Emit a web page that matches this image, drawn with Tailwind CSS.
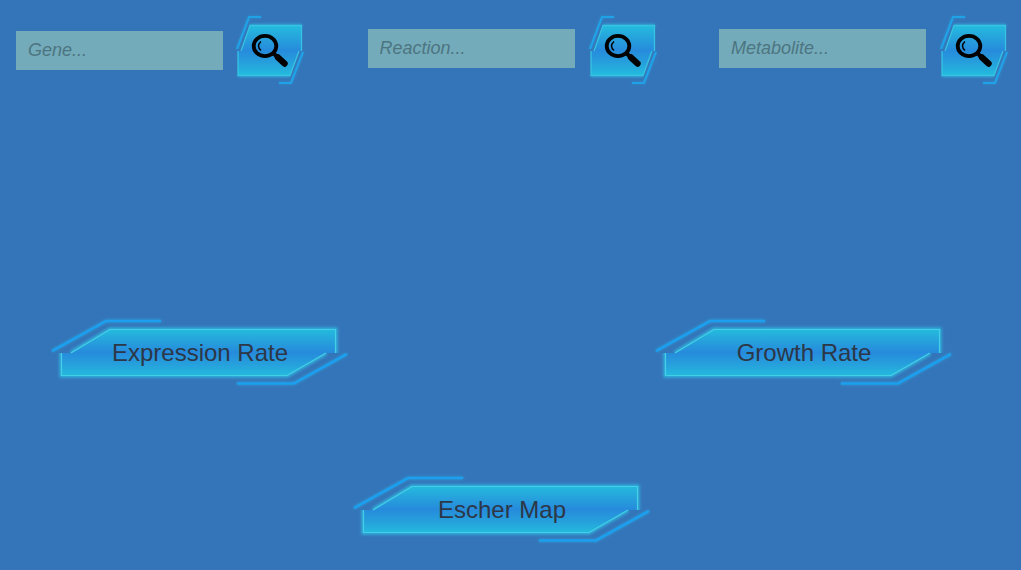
<!DOCTYPE html>
<html lang="en">
<head>
<meta charset="utf-8">
<meta name="viewport" content="width=device-width, initial-scale=1">
<title>Metabolic search</title>
<script src="https://cdn.jsdelivr.net/npm/@tailwindcss/browser@4"></script>
</head>
<body class="min-h-screen bg-[#3475b9] font-['Liberation_Sans',Arial,sans-serif]">
<svg class="absolute size-0" aria-hidden="true">
  <defs>
    <linearGradient id="fill" x1="0" y1="0" x2="0" y2="1">
      <stop offset="0" stop-color="#24bbde"/>
      <stop offset=".25" stop-color="#26a2dc"/>
      <stop offset=".5" stop-color="#268bdc"/>
      <stop offset=".75" stop-color="#26a0dc"/>
      <stop offset="1" stop-color="#24bbde"/>
    </linearGradient>
    <filter id="glow" x="-20%" y="-40%" width="140%" height="180%"><feGaussianBlur stdDeviation="1.6"/></filter>
    <clipPath id="wideTop"><rect width="310" height="41"/></clipPath>
    <clipPath id="wideBottom"><rect y="41" width="310" height="39"/></clipPath>
    <symbol id="wide" viewBox="0 0 310 80">
      <path d="M8 38.500 61 9H115M193 71.500H249L301 42.500" fill="none" stroke="#2fb9e6" stroke-width="3" stroke-linecap="round" opacity=".5" filter="url(#glow)"/>
      <path d="M8 38.500 61 9H115M193 71.500H249L301 42.500" fill="none" stroke="#1b9fee" stroke-width="2.6" stroke-linecap="round"/>
      <g clip-path="url(#wideTop)"><path d="M26 41 65 17.500H290.500V44" fill="none" stroke="#2fc6ea" stroke-width="4" opacity=".8" filter="url(#glow)"/></g>
      <g clip-path="url(#wideBottom)"><path d="M16.500 38V63.500H242L281 41" fill="none" stroke="#2fc6ea" stroke-width="4" opacity=".8" filter="url(#glow)"/></g>
      <path d="M16 41H26L65 17H291V41H281L242 64H16Z" fill="url(#fill)"/>
      <path d="M26 41 65 17.500H290.500V41M16.500 41V63.500H242L281 41" fill="none" stroke="#43d0e6" stroke-width="1.200"/>
    </symbol>
    <symbol id="small" viewBox="0 0 76 76">
      <path d="M5 37 17 5H29M47 71H59L71 40" fill="none" stroke="#2fb9e6" stroke-width="2" opacity=".35" filter="url(#glow)"/>
      <path d="M5 37 17 5H29M47 71H59L71 40" fill="none" stroke="#20a2e8" stroke-width="2.200"/>
      <path d="M18 13.500H70M6 63.500H58" fill="none" stroke="#2fc6ea" stroke-width="3" opacity=".6" filter="url(#glow)"/>
      <path d="M6 39H9L18 14H70V39H67L58 63H6Z" fill="url(#fill)"/>
      <path d="M9 39 18 13.500H69.500V39M6 39V63.500H58L67 39" fill="none" stroke="#36c3e2" stroke-width="1.300"/>
      <ellipse cx="33" cy="34" rx="11.300" ry="10.200" fill="none" stroke="#000" stroke-width="3.800"/>
      <path d="M29 29.500Q24 34 29 38.500" fill="none" stroke="#000" stroke-width="1.500"/>
      <path d="M40.500 40.500 46 45.500" stroke="#000" stroke-width="4"/>
      <path d="M46 45.500 52.500 51.500" stroke="#000" stroke-width="6.400" stroke-linecap="round"/>
    </symbol>
  </defs>
</svg>

<header class="flex items-start justify-between pt-3 pr-[9px] pl-4">
  <form class="flex w-[293px] items-start gap-[9px]">
    <input type="text" aria-label="Gene" placeholder="Gene..." class="mt-[19px] h-[39px] w-[207px] bg-[#74abba] px-3 text-lg italic text-[#2d4650] outline-none placeholder:text-[#4c7581]">
    <button type="button" aria-label="Search gene" class="size-[76px] cursor-pointer"><svg class="size-full"><use href="#small"/></svg></button>
  </form>
  <form class="flex w-[293px] items-start justify-between">
    <input type="text" aria-label="Reaction" placeholder="Reaction..." class="mt-[17px] h-[39px] w-[207px] bg-[#74abba] px-3 text-lg italic text-[#2d4650] outline-none placeholder:text-[#4c7581]">
    <button type="button" aria-label="Search reaction" class="size-[76px] cursor-pointer"><svg class="size-full"><use href="#small"/></svg></button>
  </form>
  <form class="flex w-[293px] items-start justify-between">
    <input type="text" aria-label="Metabolite" placeholder="Metabolite..." class="mt-[17px] h-[39px] w-[207px] bg-[#74abba] px-3 text-lg italic text-[#2d4650] outline-none placeholder:text-[#4c7581]">
    <button type="button" aria-label="Search metabolite" class="size-[76px] cursor-pointer"><svg class="size-full"><use href="#small"/></svg></button>
  </form>
</header>

<main class="flex flex-col gap-[77px] pt-[224px] pr-[17px]">
  <div class="flex justify-between px-[45px]">
    <button type="button" class="relative h-20 w-[310px] cursor-pointer pt-0.5 text-2xl text-[#2c3747]"><svg class="absolute inset-0 size-full" aria-hidden="true"><use href="#wide"/></svg><span class="relative">Expression Rate</span></button>
    <button type="button" class="relative h-20 w-[310px] cursor-pointer pt-0.5 text-2xl text-[#2c3747]"><svg class="absolute inset-0 size-full" aria-hidden="true"><use href="#wide"/></svg><span class="relative">Growth Rate</span></button>
  </div>
  <div class="flex justify-center">
    <button type="button" class="relative h-20 w-[310px] cursor-pointer pt-0.5 text-2xl text-[#2c3747]"><svg class="absolute inset-0 size-full" aria-hidden="true"><use href="#wide"/></svg><span class="relative">Escher Map</span></button>
  </div>
</main>
</body>
</html>
